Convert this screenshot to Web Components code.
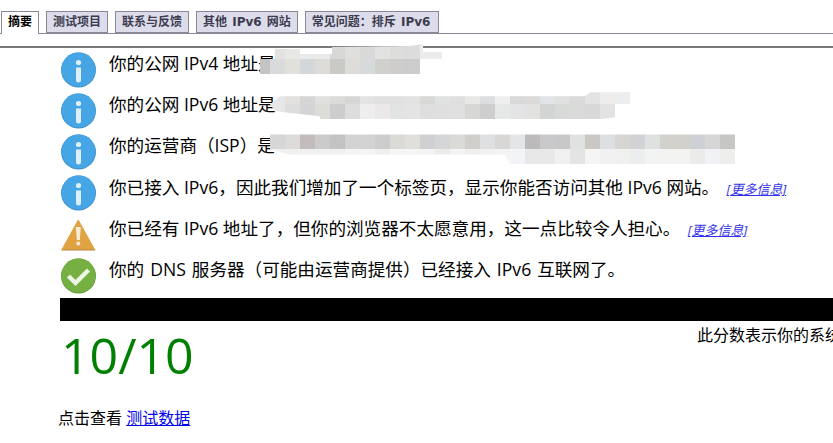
<!DOCTYPE html>
<html lang="zh">
<head>
<meta charset="utf-8">
<title>测试你的 IPv6</title>
<style>
body {
	margin: 0;
	background: #fff;
	color: #000;
	font-family: "Open Sans", "Noto Sans CJK SC", sans-serif;
	overflow: hidden;
}
</style>
</head>
<body>
<tab-bar>
	<tab-item active>摘要</tab-item>
	<tab-item>测试项目</tab-item>
	<tab-item>联系与反馈</tab-item>
	<tab-item>其他 IPv6 网站</tab-item>
	<tab-item style="padding-right:8px">常见问题：排斥 IPv6</tab-item>
</tab-bar>
<summary-list>
	<result-row icon="info">你的公网 IPv4 地址是<blur-patch style="left:200px;top:-5px;clip-path:polygon(0 15px,15px 15px,15px 5px,40px 5px,40px 10px,72px 10px,72px 3px,150px 2px,163px 0,163px 8px,182px 8px,182px 15px,160px 15px,160px 30px,0 30px)" cells="10:0,15:e2e2e0,15:e8e8e6,15:eaeaea,15:eaeaea,15:d8d8d6,15:dfdfdd,15:d9dad8,15:e2e2e2,15:dddddc,15:dbdcdb,22:ececec|10:c4c4c4,15:d8dadb,15:e2e0dc,15:d3d7d9,15:dddcd8,15:c9c9c5,15:dedcd8,15:d7dadb,15:d0d0cd,15:cfcdcc,15:cbcccb"></blur-patch></result-row>
	<result-row icon="info">你的公网 IPv6 地址是<blur-patch style="left:200px;top:-1px;clip-path:polygon(10px 15px,20px 7px,325px 7px,330px 3px,370px 3px,370px 15px,355px 15px,355px 28px,340px 30px,60px 30px,60px 27px,15px 22px)" cells="10:0,15:e6e6e6,15:e2e1df,15:d5d5d6,15:dfe1df,15:dbdcda,15:d6d6d6,15:e3e3e3,15:e0e0df,15:dfe0df,15:e2e2e2,15:d8d8d6,15:e0e1e1,15:dfdfe0,15:e8e8e6,15:dddedf,15:efefef,15:d9d9d9,15:dbdad8,15:e2e3e6,15:dfe0df,15:d9dad9,15:e3e3e3,15:eeedeb,15:ecedef|10:0,15:e7e7e7,15:dddddd,15:d4d4d6,15:dcdcd9,15:cdcdcd,15:dcdedc,15:eeeeee,15:ebe9e7,15:e2e4e3,15:e4e4e4,15:dddedd,15:dedfde,15:e0e0e1,15:d7d7d6,15:cecece,15:e6e8e7,15:e4e4e6,15:e2e2e0,15:d3d4d4,15:d8dad8,15:dadada,15:d8d8d8,15:e3e3e3,15:fbfcfe"></blur-patch></result-row>
	<result-row icon="info">你的运营商（ISP）是<blur-patch style="left:200px;top:3px;clip-path:polygon(10px 0,475px 0,475px 30px,250px 30px,245px 20px,30px 20px,10px 15px)" cells="10:d6d6d6,15:d6d6d6,15:dddcda,15:c2bcbd,15:cbcbcc,15:c3c3c3,15:d3d3d3,15:d2d4d3,15:cdcdcd,15:dadad7,15:e0dfdc,15:d0d0d3,15:d4d6d8,15:dadad7,15:d1cfcc,15:dfe0e2,15:d8d7d5,15:e4e5e7,15:bdbabb,15:c9c8cb,15:c8c8c8,15:e0e2e1,15:cac7c4,15:dddfe2,15:d6d5d2,15:d2d2d6,15:dee1e0,15:d2d1cb,15:d2d1cb,15:cdd0d4,15:d6d6d6,15:c6c6c4|10:f0f0f0,15:f0f0f0,15:f0f0f0,15:f0f0f0,15:f0f0f0,15:f0f0f0,15:f3f4f6,15:f5f5f5,15:efefef,15:f6f6f6,15:f5f5f5,15:f2f3f5,15:ebebe9,15:f3f4f4,15:f0efed,15:f1f1f1,15:f4f4f4,15:f3f4f7,15:e8e8e8,15:e7e8e7,15:f0f0f0,15:e4e4e4,15:f6f5f3,15:f1f1f1,15:f0f0ef,15:ecedef,15:f2f4f4,15:f3f3f1,15:f3f3f1,15:ebebe9,15:f1f2f5,15:eeeeec"></blur-patch></result-row>
	<result-row icon="info">你已接入 IPv6，因此我们增加了一个标签页，显示你能否访问其他 IPv6 网站。<more-link>[更多信息]</more-link></result-row>
	<result-row icon="warn">你已经有 IPv6 地址了，但你的浏览器不太愿意用，这一点比较令人担心。<more-link>[更多信息]</more-link></result-row>
	<result-row icon="ok" style="word-spacing:1.4px">你的 DNS 服务器（可能由运营商提供）已经接入 IPv6 互联网了。</result-row>
</summary-list>
<score-band></score-band>
<score-line score="10/10">此分数表示你的系统已准备好迎接未来的 IPv6 互联网</score-line>
<data-link>点击查看 <a href="#">测试数据</a></data-link>

<script>
class TabBar extends HTMLElement {
	constructor() {
		super();
		this.attachShadow({mode: 'open'}).innerHTML = `
	<style>
	:host {
		display: block;
		height: 46px;
		border-bottom: 2px solid #7a7a7a;
	}
	div {
		display: flex;
		gap: 7px;
		height: 34px;
		box-sizing: border-box;
		padding: 11px 0 0 1px;
		border-bottom: 1px solid #8b8799;
	}
	</style>
	<div><slot></slot></div>
	`;
	}
}
customElements.define('tab-bar', TabBar);

class TabItem extends HTMLElement {
	constructor() {
		super();
		this.attachShadow({mode: 'open'}).innerHTML = `
	<style>
	:host {
		display: block;
		height: 22px;
		box-sizing: border-box;
		padding: 0 6px;
		border: 1px solid #8b8799;
		background: #dddcea;
		color: #3c3c50;
		font: bold 12px/20px "DejaVu Sans", "Noto Sans CJK SC", sans-serif;
		word-spacing: 1px;
		white-space: nowrap;
	}
	:host([active]) {
		height: 23px;
		background: #fff;
		color: #000;
		border-bottom: 0;
	}
	</style>
	<slot></slot>
	`;
	}
}
customElements.define('tab-item', TabItem);

class SummaryList extends HTMLElement {
	constructor() {
		super();
		this.attachShadow({mode: 'open'}).innerHTML = `
	<style>
	:host {
		display: flex;
		flex-direction: column;
		padding: 1px 0 2px 60px;
	}
	</style>
	<slot></slot>
	`;
	}
}
customElements.define('summary-list', SummaryList);

const ICONS = {
	info: `<svg width="36" height="36" viewBox="0 0 36 36">
		<circle cx="18.5" cy="18" r="17.5" fill="#3f8fc9"/>
		<circle cx="18.5" cy="17.5" r="17" fill="#46a5e4"/>
		<circle cx="18.5" cy="10.5" r="2.6" fill="#dfeffa"/>
		<path d="M16 15.5h5v12.5a2.5 2.5 0 0 1-5 0z" fill="#dfeffa"/>
	</svg>`,
	warn: `<svg width="36" height="36" viewBox="0 0 36 36">
		<path d="M18.3 4 34.5 33.5H2z" fill="#e0a342" stroke="#e0a342" stroke-linejoin="round"/>
		<path d="M1.6 33.5h33.4l.3 1H1.2z" fill="#b98a45"/>
		<path d="M15.8 11h5l-1 13h-3z" fill="#f7ecd9"/>
		<circle cx="18.3" cy="27.5" r="2" fill="#f7ecd9"/>
	</svg>`,
	ok: `<svg width="36" height="36" viewBox="0 0 36 36">
		<circle cx="18.5" cy="18" r="17.5" fill="#5f9a38"/>
		<circle cx="18.5" cy="17.5" r="17" fill="#76b043"/>
		<path d="M8.5 18l7 7 13-13" fill="none" stroke="#edf5e6" stroke-width="4.4"/>
	</svg>`
};

class ResultRow extends HTMLElement {
	constructor() {
		super();
		var icon = ICONS[this.getAttribute('icon')];
		this.attachShadow({mode: 'open'}).innerHTML = `
	<style>
	:host {
		display: flex;
		align-items: center;
		gap: 13px;
		height: 41.2px;
		font-size: 17.6px;
		white-space: nowrap;
		position: relative;
		color: #000;
	}
	.mark {
		display: block;
		width: 36px;
		height: 36px;
		flex: none;
	}
	.text {
		margin-top: -14px;
	}
	</style>
	<span class="mark">${icon}</span>
	<span class="text"><slot></slot></span>
	`;
	}
}
customElements.define('result-row', ResultRow);

class MoreLink extends HTMLElement {
	constructor() {
		super();
		this.attachShadow({mode: 'open'}).innerHTML = `
	<style>
	:host {
		font-size: 13px;
		font-style: italic;
		margin-left: 4px;
	}
	a {
		color: #3333ee;
	}
	</style>
	<a href="#"><slot></slot></a>
	`;
	}
}
customElements.define('more-link', MoreLink);

// pixelated smudge that hides an address, columns are width:colour, rows split by |
class BlurPatch extends HTMLElement {
	constructor() {
		super();
		var rows = this.getAttribute('cells').split('|').map(function (row) {
			var cells = row.split(',').map(function (cell) {
				var parts = cell.split(':');
				var bg = parts[1] === '0' ? 'transparent' : '#' + parts[1];
				return `<i style="width:${parts[0]}px;background:${bg}"></i>`;
			});
			return `<b>${cells.join('')}</b>`;
		});
		this.attachShadow({mode: 'open'}).innerHTML = `
	<style>
	:host {
		display: block;
		position: absolute;
		width: 500px;
	}
	b {
		display: flex;
		height: 15px;
	}
	i {
		display: block;
		flex: none;
	}
	</style>
	${rows.join('')}
	`;
	}
}
customElements.define('blur-patch', BlurPatch);

class ScoreBand extends HTMLElement {
	constructor() {
		super();
		this.attachShadow({mode: 'open'}).innerHTML = `
	<style>
	:host {
		display: block;
		height: 23px;
		margin: 0 0 0 60px;
		background: #000;
	}
	</style>
	`;
	}
}
customElements.define('score-band', ScoreBand);

class ScoreLine extends HTMLElement {
	constructor() {
		super();
		this.attachShadow({mode: 'open'}).innerHTML = `
	<style>
	:host {
		display: flex;
		height: 75px;
		padding-left: 61px;
		white-space: nowrap;
		overflow: hidden;
	}
	.num {
		width: 636px;
		flex: none;
		color: #008000;
		font-size: 50px;
		line-height: 69px;
	}
	.note {
		font-size: 16px;
		line-height: 28px;
	}
	</style>
	<span class="num">${this.getAttribute('score')}</span>
	<span class="note"><slot></slot></span>
	`;
	}
}
customElements.define('score-line', ScoreLine);

class DataLink extends HTMLElement {
	constructor() {
		super();
		this.attachShadow({mode: 'open'}).innerHTML = `
	<style>
	:host {
		display: block;
		padding: 12px 0 0 58px;
		font-size: 16px;
		line-height: 20px;
	}
	::slotted(a) {
		color: #0000ee;
	}
	</style>
	<slot></slot>
	`;
	}
}
customElements.define('data-link', DataLink);
</script>
</body>
</html>
